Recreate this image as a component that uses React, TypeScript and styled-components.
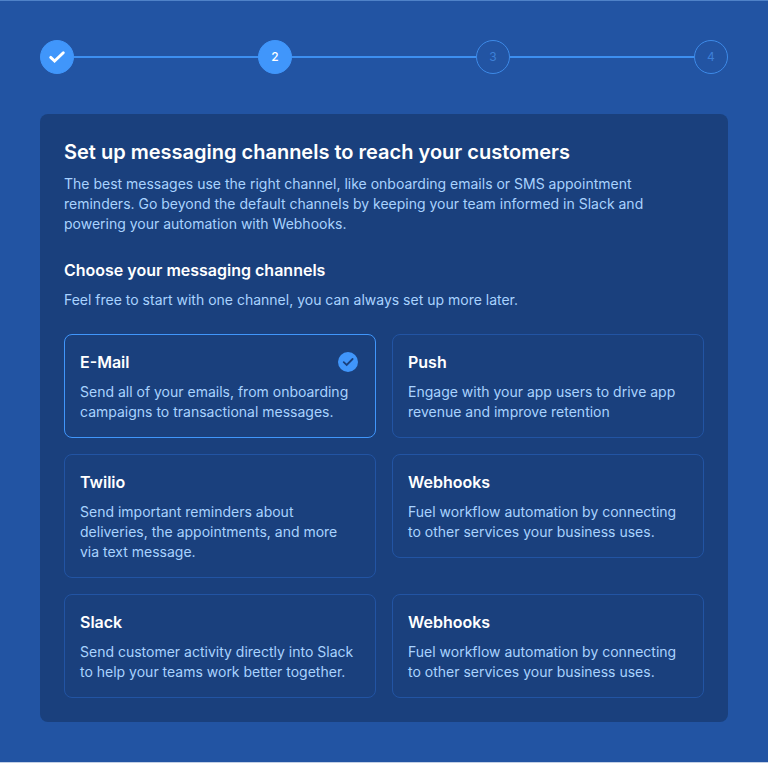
import React, { useState } from "react";
import styled, { createGlobalStyle } from "styled-components";

const GlobalStyle = createGlobalStyle`
  *, *::before, *::after { box-sizing: border-box; }
  body {
    margin: 0;
    background: #2254a3;
    font-family: Inter, "Liberation Sans", sans-serif;
    color: #ffffff;
  }
  h1, h2, p, ol { margin: 0; padding: 0; }
`;

const Page = styled.main`
  display: flex;
  flex-direction: column;
  gap: 40px;
  min-height: 100vh;
  padding: 39px 40px 40px;
  border-top: 1px solid #4f82c8;
  border-bottom: 1px solid #c3d0e6;
  background: #2254a3;
`;

const Steps = styled.ol`
  display: flex;
  align-items: center;
  list-style: none;
`;

const Step = styled.li<{ $last?: boolean }>`
  display: flex;
  align-items: center;
  flex: ${({ $last }) => ($last ? "none" : "1")};
`;

const Connector = styled.span`
  flex: 1;
  height: 2px;
  background: #3d8ff0;
`;

const StepDot = styled.span<{ $active: boolean }>`
  display: flex;
  align-items: center;
  justify-content: center;
  width: 34px;
  height: 34px;
  border: 1px solid ${({ $active }) => ($active ? "#4096fb" : "#3d8ae8")};
  border-radius: 50%;
  background: ${({ $active }) => ($active ? "#4096fb" : "transparent")};
  color: ${({ $active }) => ($active ? "#ffffff" : "#3d80d8")};
  font-size: 12px;
  line-height: 16px;
  font-weight: ${({ $active }) => ($active ? 500 : 400)};
`;

const Panel = styled.section`
  display: flex;
  flex-direction: column;
  gap: 24px;
  padding: 24px;
  border-radius: 8px;
  background: #1a407d;
`;

const Heading = styled.header`
  display: flex;
  flex-direction: column;
  gap: 8px;
`;

const Title = styled.h1`
  font-size: 20px;
  line-height: 28px;
  font-weight: 600;
`;

const Subtitle = styled.h2`
  font-size: 16px;
  line-height: 24px;
  font-weight: 600;
`;

const Text = styled.p`
  max-width: 600px;
  color: #a9d3ff;
  font-size: 14px;
  line-height: 20px;
`;

const Channels = styled.div`
  display: grid;
  grid-template-columns: 1fr 1fr;
  align-items: start;
  gap: 16px;
`;

const Card = styled.button<{ $selected: boolean }>`
  display: flex;
  flex-direction: column;
  gap: 8px;
  padding: 15px;
  border: 1px solid ${({ $selected }) => ($selected ? "#4096fb" : "#2254a3")};
  border-radius: 8px;
  background: transparent;
  color: #ffffff;
  font-family: inherit;
  text-align: left;
  cursor: pointer;
`;

const CardHead = styled.span`
  display: flex;
  align-items: center;
  justify-content: space-between;
  align-self: stretch;
  padding-right: 2px;
  font-size: 16px;
  line-height: 24px;
  font-weight: 600;
`;

const CardText = styled.span`
  color: #a9d3ff;
  font-size: 14px;
  line-height: 20px;
`;

const Check = () => (
  <svg width="18" height="14" viewBox="0 0 18 14" fill="none" role="img" aria-label="Completed">
    <path
      d="M2.7 7.4L6.6 11.1L15.3 2.8"
      stroke="#ffffff"
      strokeWidth="2.9"
      strokeLinecap="round"
      strokeLinejoin="miter"
    />
  </svg>
);

const SelectedMark = () => (
  <svg width="20" height="20" viewBox="0 0 20 20" fill="none" aria-hidden="true">
    <circle cx="10" cy="10" r="10" fill="#4096fb" />
    <path
      d="M5.7 10.2L8.7 13L14.6 7"
      stroke="#1a407d"
      strokeWidth="1.8"
      strokeLinecap="round"
    />
  </svg>
);

const channels = [
  { title: "E-Mail", text: "Send all of your emails, from onboarding campaigns to transactional messages." },
  { title: "Push", text: "Engage with your app users to drive app revenue and improve retention" },
  { title: "Twilio", text: "Send important reminders about deliveries, the appointments, and more via text message." },
  { title: "Webhooks", text: "Fuel workflow automation by connecting to other services your business uses." },
  { title: "Slack", text: "Send customer activity directly into Slack to help your teams work better together." },
  { title: "Webhooks", text: "Fuel workflow automation by connecting to other services your business uses." },
];

export default function App() {
  const [selected, setSelected] = useState<number[]>([0]);
  const toggle = (index: number) =>
    setSelected((now) => (now.includes(index) ? now.filter((n) => n !== index) : [...now, index]));

  return (
    <>
      <GlobalStyle />
      <Page>
        <Steps aria-label="Setup progress">
          {[1, 2, 3, 4].map((step) => (
            <Step key={step} $last={step === 4} aria-current={step === 2 ? "step" : undefined}>
              <StepDot $active={step <= 2}>{step === 1 ? <Check /> : step}</StepDot>
              {step < 4 && <Connector />}
            </Step>
          ))}
        </Steps>
        <Panel>
          <Heading>
            <Title>Set up messaging channels to reach your customers</Title>
            <Text>
              The best messages use the right channel, like onboarding emails or SMS appointment reminders. Go beyond
              the default channels by keeping your team informed in Slack and powering your automation with Webhooks.
            </Text>
          </Heading>
          <Heading>
            <Subtitle>Choose your messaging channels</Subtitle>
            <Text>Feel free to start with one channel, you can always set up more later.</Text>
          </Heading>
          <Channels>
            {channels.map((channel, index) => {
              const on = selected.includes(index);
              return (
                <Card key={index} type="button" $selected={on} aria-pressed={on} onClick={() => toggle(index)}>
                  <CardHead>
                    {channel.title}
                    {on && <SelectedMark />}
                  </CardHead>
                  <CardText>{channel.text}</CardText>
                </Card>
              );
            })}
          </Channels>
        </Panel>
      </Page>
    </>
  );
}
